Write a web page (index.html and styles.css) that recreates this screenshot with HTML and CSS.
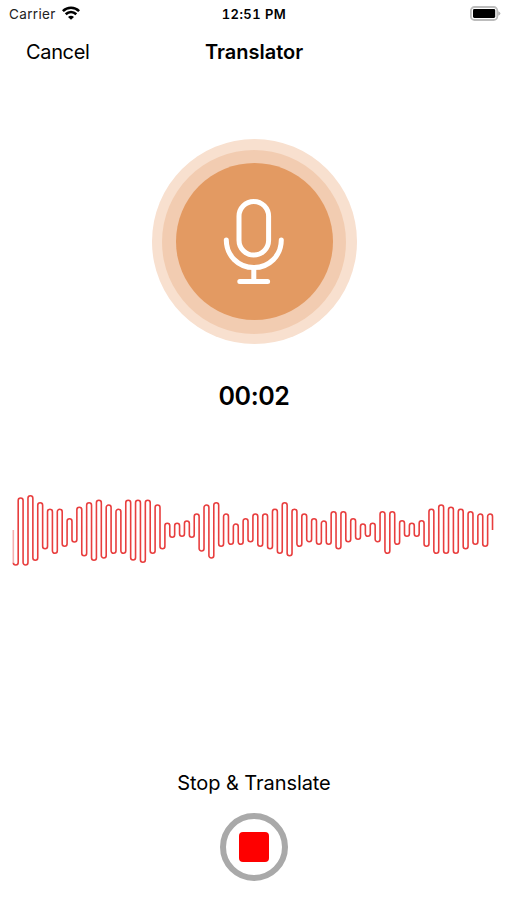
FILE: index.html
```html
<!DOCTYPE html>
<html lang="en">
<head>
    <meta charset="UTF-8">
    <meta name="viewport" content="width=device-width, initial-scale=1.0">
    <title>Translator</title>
    <link rel="stylesheet" href="styles.css">
</head>
<body>

<!-- Status bar -->
<div class="status-bar">
    <div class="carrier">
        <span>Carrier</span>
        <svg class="wifi" width="18" height="14" viewBox="0 0 18 14" fill="none" stroke="#000" stroke-width="2.6">
            <path d="M0.9 5.1 C5.4 0.7 12.6 0.7 17.1 5.1"/>
            <path d="M3.7 8.3 C6.8 5.4 11.2 5.4 14.3 8.3"/>
            <path d="M9 13.8 L6 10.9 C7.7 9.4 10.3 9.4 12 10.9 Z" fill="#000" stroke="none"/>
        </svg>
    </div>
    <span class="time">12:51 PM</span>
    <div class="battery-wrap">
        <svg width="31" height="15" viewBox="0 0 31 15">
            <rect x="0.9" y="1" width="26.4" height="13" rx="3.6" fill="#fff" stroke="#bcbcbc" stroke-width="1.8"/>
            <rect x="3" y="3.1" width="22.2" height="8.8" rx="1.3" fill="#000"/>
            <path d="M28.2 5.2 Q30.4 6 30.4 7.5 Q30.4 9 28.2 9.8 Z" fill="#b5b5b5"/>
        </svg>
    </div>
</div>

<!-- Navigation bar -->
<div class="nav-bar">
    <span class="cancel">Cancel</span>
    <h1>Translator</h1>
</div>

<!-- Microphone -->
<div class="mic-outer">
    <div class="mic-middle">
        <div class="mic-inner">
            <svg width="64" height="88" viewBox="0 0 64 88" fill="none" stroke="#fff" stroke-width="5" stroke-linecap="round">
                <rect x="17" y="3.5" width="29.6" height="53.5" rx="14.8"/>
                <path d="M4.3 42 C4.3 57.5 16.3 69.6 31.8 69.6 C47.3 69.6 59.3 57.5 59.3 42"/>
                <path d="M31.8 70 V83.5 M17.8 83.5 H45.6"/>
            </svg>
        </div>
    </div>
</div>

<div class="timer">00:02</div>

<svg class="waveform" width="507" height="80" viewBox="0 490 507 80">
    <path id="wave"/>
    <path id="waveStart"/>
</svg>

<!-- Stop button -->
<div class="stop-label">Stop &amp; Translate</div>
<div class="stop-button"><div class="stop-icon"></div></div>

<script>
    // Upper and lower turning points of the sound wave
    const tops = [498, 495.7, 502.7, 509.3, 509.3, 518.7, 507.3, 502.7, 500.3, 505, 509.3, 500.3,
        500.3, 500.3, 505, 523.3, 523.3, 521, 514, 505, 502.7, 514, 524, 518.7, 514,
        514, 509.3, 502.7, 509.3, 514, 518.7, 521, 511.7, 511.7, 518.7, 524, 523.3, 511.7,
        511.7, 520.7, 523.3, 520.7, 509.3, 505, 507.3, 509.3, 511.7, 514, 514];
    const bottoms = [565, 565, 560.3, 548.7, 553.3, 546.3, 542, 555.7, 560.3, 558, 553.3, 553.3,
        560, 562.3, 553.3, 548.7, 537.3, 536.3, 537.3, 551, 558, 546.3, 544.3, 544.3, 541.7,
        546.3, 548.7, 553.3, 555.7, 546.3, 541.7, 544.3, 544.3, 548.7, 541.7, 539.3, 536.3, 541.7,
        553.3, 544.3, 536.3, 536.3, 546.3, 553.3, 553.3, 553.3, 548.7, 544.3, 546.3];
    const step = 4.89;
    const r = step / 2;
    const startX = 13.3;

    let x = startX + step;
    let d = `M${startX} 562.5 A${r} ${r} 0 0 0 ${x} 562.5`;
    for (let i = 0; i < tops.length; i++) {
        if (i > 0) {
            d += ` V${bottoms[i] - r} A${r} ${r} 0 0 0 ${x + step} ${bottoms[i] - r}`;
            x += step;
        }
        d += ` V${tops[i] + r} A${r} ${r} 0 0 1 ${x + step} ${tops[i] + r}`;
        x += step;
    }
    d += " V530";
    document.getElementById("wave").setAttribute("d", d);
    document.getElementById("waveStart").setAttribute("d", `M${startX} 530 V562.5`);
</script>

</body>
</html>
```
FILE: styles.css
```css
body {
    margin: 0;
    height: 900px;
    overflow: hidden;
    background-color: #fff;
    color: #000;
    font-family: Inter, "Liberation Sans", sans-serif;
    display: flex;
    flex-direction: column;
    align-items: center;
    padding-left: 1px;
}

.status-bar {
    width: 100%;
    height: 28px;
    box-sizing: border-box;
    padding: 0 6px 0 8px;
    display: grid;
    grid-template-columns: 1fr auto 1fr;
    align-items: center;
    font-size: 13.5px;
}

.carrier {
    display: flex;
    align-items: center;
    gap: 6px;
    color: #222;
    letter-spacing: 0.35px;
}

.wifi {
    margin-top: -2px;
}

.time {
    margin-right: 2px;
    font-weight: 600;
    font-size: 13px;
    font-variant-numeric: tabular-nums;
    letter-spacing: 0.45px;
}

.battery-wrap {
    display: flex;
    justify-content: flex-end;
    margin-top: -2px;
}

.nav-bar {
    width: 100%;
    height: 48px;
    box-sizing: border-box;
    padding: 0 25px;
    display: grid;
    grid-template-columns: 1fr auto 1fr;
    align-items: center;
}

.cancel {
    font-size: 20px;
    letter-spacing: -0.35px;
}

h1 {
    margin: 0;
    font-size: 20px;
    font-weight: 600;
    letter-spacing: 0;
}

.mic-outer, .mic-middle, .mic-inner {
    border-radius: 50%;
    display: flex;
    align-items: center;
    justify-content: center;
}

.mic-outer {
    width: 205px;
    height: 205px;
    margin-top: 63px;
    background-color: #f8e0cf;
}

.mic-middle {
    width: 184px;
    height: 184px;
    background-color: #f2ccb1;
}

.mic-inner {
    width: 157px;
    height: 157px;
    background-color: #e39a62;
}

.timer {
    margin-top: 36px;
    height: 32px;
    line-height: 32px;
    font-size: 25px;
    font-weight: 600;
    letter-spacing: -0.4px;
}

.waveform {
    margin: 78px 0 0 -1px;
    fill: none;
    stroke: #e83e3e;
    stroke-width: 1.6;
}

#waveStart {
    stroke: #f5b0b0;
}

.stop-label {
    margin-top: 200px;
    height: 26px;
    line-height: 26px;
    font-size: 20px;
    letter-spacing: -0.07px;
}

.stop-button {
    width: 68px;
    height: 68px;
    box-sizing: border-box;
    margin-top: 17px;
    border: 6px solid #a9a9a9;
    border-radius: 50%;
    display: flex;
    align-items: center;
    justify-content: center;
}

.stop-icon {
    width: 30px;
    height: 30px;
    border-radius: 4px;
    background-color: #fe0000;
}
```
